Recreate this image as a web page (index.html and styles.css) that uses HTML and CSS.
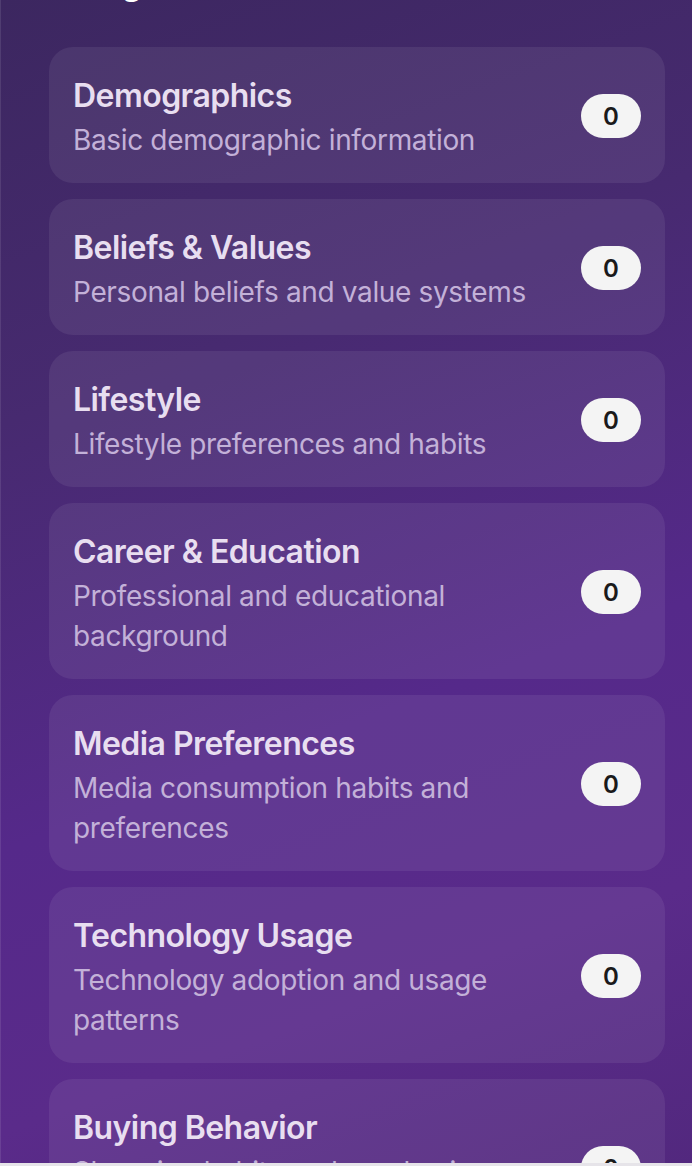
FILE: index.html
```html
<!DOCTYPE html>
<html lang="en">
<head>
<meta charset="utf-8">
<title>Categories</title>
<link rel="stylesheet" href="styles.css">
</head>
<body>
<main class="page">
  <h2 class="heading">Categories</h2>
  <ul class="cards">
    <li class="card">
      <div class="card-text">
        <div class="card-title">Demographics</div>
        <div class="card-desc">Basic demographic information</div>
      </div>
      <span class="badge">0</span>
    </li>
    <li class="card">
      <div class="card-text">
        <div class="card-title">Beliefs &amp; Values</div>
        <div class="card-desc">Personal beliefs and value systems</div>
      </div>
      <span class="badge">0</span>
    </li>
    <li class="card">
      <div class="card-text">
        <div class="card-title">Lifestyle</div>
        <div class="card-desc">Lifestyle preferences and habits</div>
      </div>
      <span class="badge">0</span>
    </li>
    <li class="card">
      <div class="card-text">
        <div class="card-title">Career &amp; Education</div>
        <div class="card-desc">Professional and educational background</div>
      </div>
      <span class="badge">0</span>
    </li>
    <li class="card">
      <div class="card-text">
        <div class="card-title">Media Preferences</div>
        <div class="card-desc">Media consumption habits and preferences</div>
      </div>
      <span class="badge">0</span>
    </li>
    <li class="card">
      <div class="card-text">
        <div class="card-title">Technology Usage</div>
        <div class="card-desc">Technology adoption and usage patterns</div>
      </div>
      <span class="badge">0</span>
    </li>
    <li class="card">
      <div class="card-text">
        <div class="card-title">Buying Behavior</div>
        <div class="card-desc">Shopping habits and purchasing patterns</div>
      </div>
      <span class="badge">0</span>
    </li>
  </ul>
</main>
<div class="edge"></div>
</body>
</html>
```

FILE: styles.css
```css
html, body {
  margin: 0;
  padding: 0;
  height: 100%;
  overflow: hidden;
}
body {
  font-family: Inter, "Noto Sans", sans-serif;
  background: linear-gradient(160deg, #3c2760 0%, #472a70 30%, #55298a 60%, #5a2b8a 80%, #52287e 100%);
  border-left: 1px solid rgba(255, 255, 255, 0.1);
  box-sizing: border-box;
}
.page {
  padding: 0 27px 0 48px;
}
.heading {
  margin: -40px 0 39px 0;
  font-size: 32px;
  line-height: 48px;
  font-weight: 700;
  color: #ffffff;
}
.cards {
  list-style: none;
  margin: 0;
  padding: 0;
  display: flex;
  flex-direction: column;
  gap: 16px;
}
.card {
  display: flex;
  align-items: center;
  justify-content: space-between;
  gap: 24px;
  padding: 25px 24px 23px;
  border-radius: 24px;
  background: rgba(255, 255, 255, 0.07);
}
.card-text {
  display: flex;
  flex-direction: column;
}
.card-title {
  font-size: 32px;
  line-height: 48px;
  font-weight: 600;
  letter-spacing: -0.55px;
  color: #e8def0;
}
.card-desc {
  font-size: 28px;
  line-height: 40px;
  font-weight: 400;
  letter-spacing: -0.35px;
  color: #c3b1d8;
}
.badge {
  flex: none;
  display: inline-flex;
  align-items: center;
  justify-content: center;
  min-width: 60px;
  height: 44px;
  border-radius: 22px;
  background: #f4f4f4;
  color: #1a1a1a;
  font-size: 24px;
  font-weight: 600;
}
.edge {
  position: fixed;
  left: 0;
  right: 0;
  bottom: 0;
  height: 3px;
  background: #e6e4e9;
}
```
